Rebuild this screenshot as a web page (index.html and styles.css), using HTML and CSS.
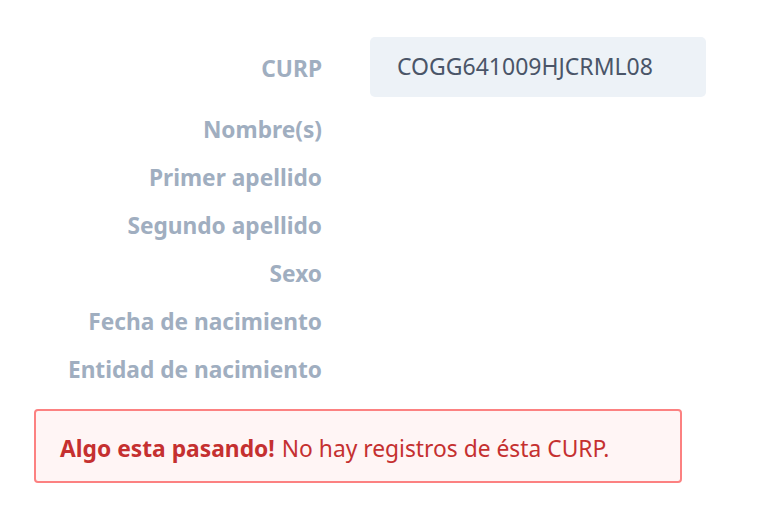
FILE: index.html
```html
<!DOCTYPE html>
<html lang="es">
<head>
<meta charset="utf-8">
<link rel="stylesheet" href="styles.css">
</head>
<body>
<main class="page">
  <div class="form">
    <div class="row row-input">
      <span class="label label-input">CURP</span>
      <div class="input">COGG641009HJCRML08</div>
    </div>
    <div class="row"><span class="label">Nombre(s)</span><span class="value"></span></div>
    <div class="row"><span class="label">Primer apellido</span><span class="value"></span></div>
    <div class="row"><span class="label">Segundo apellido</span><span class="value"></span></div>
    <div class="row"><span class="label">Sexo</span><span class="value"></span></div>
    <div class="row"><span class="label">Fecha de nacimiento</span><span class="value"></span></div>
    <div class="row"><span class="label">Entidad de nacimiento</span><span class="value"></span></div>
  </div>
  <div class="alert"><strong>Algo esta pasando!</strong> No hay registros de ésta CURP.</div>
</main>
</body>
</html>
```
FILE: styles.css
```css
html, body {
  margin: 0;
  background: #ffffff;
}
body {
  font-family: "Noto Sans", "Open Sans", sans-serif;
  font-size: 23px;
  line-height: 1.2;
}
.page {
  padding: 37px 0 0 34px;
}
.form {
  display: flex;
  flex-direction: column;
}
.row {
  display: grid;
  grid-template-columns: 288px 336px;
  column-gap: 48px;
  align-items: center;
  height: 48px;
}
.row-input {
  height: 60px;
  margin-bottom: 8px;
}
.label {
  text-align: right;
  font-weight: 700;
  color: #a0aec0;
  font-size: 22.7px;
  padding-top: 1px;
}
.label-input {
  padding-top: 4px;
}
.input {
  height: 60px;
  box-sizing: border-box;
  background: #edf2f7;
  border-radius: 5px;
  padding: 0 0 0 27px;
  display: flex;
  align-items: center;
  color: #4a5568;
}
.alert {
  margin-top: 16px;
  width: 648px;
  height: 74px;
  box-sizing: border-box;
  border: 2px solid #fc8181;
  border-radius: 4px;
  background: #fff5f5;
  color: #c53030;
  padding: 5px 0 0 24px;
  display: flex;
  align-items: center;
  font-size: 22.8px;
}
.alert strong {
  font-weight: 700;
  margin-right: 7px;
}
```
